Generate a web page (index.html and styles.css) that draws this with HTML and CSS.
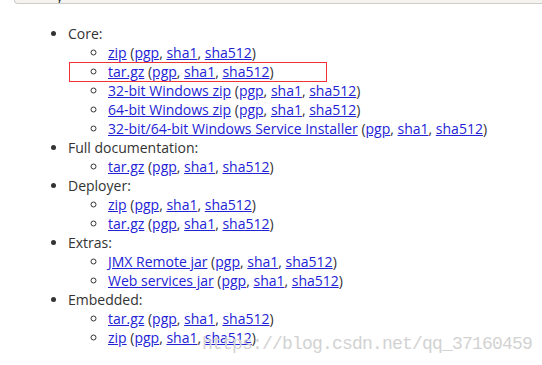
FILE: index.html
```html
<!DOCTYPE html>
<html>
<head>
<meta charset="utf-8">
<link rel="stylesheet" href="styles.css">
</head>
<body>
<div class="topbox"><span class="cut">y</span></div>
<ul class="list">
  <li>Core:
    <ul class="sub">
      <li><a href="#">zip</a> (<a href="#">pgp</a>, <a href="#">sha1</a>, <a href="#">sha512</a>)</li>
      <li><a href="#">tar.gz</a> (<a href="#">pgp</a>, <a href="#">sha1</a>, <a href="#">sha512</a>)</li>
      <li><a href="#">32-bit Windows zip</a> (<a href="#">pgp</a>, <a href="#">sha1</a>, <a href="#">sha512</a>)</li>
      <li><a href="#">64-bit Windows zip</a> (<a href="#">pgp</a>, <a href="#">sha1</a>, <a href="#">sha512</a>)</li>
      <li><a href="#">32-bit/64-bit Windows Service Installer</a> (<a href="#">pgp</a>, <a href="#">sha1</a>, <a href="#">sha512</a>)</li>
    </ul>
  </li>
  <li>Full documentation:
    <ul class="sub">
      <li><a href="#">tar.gz</a> (<a href="#">pgp</a>, <a href="#">sha1</a>, <a href="#">sha512</a>)</li>
    </ul>
  </li>
  <li>Deployer:
    <ul class="sub">
      <li><a href="#">zip</a> (<a href="#">pgp</a>, <a href="#">sha1</a>, <a href="#">sha512</a>)</li>
      <li><a href="#">tar.gz</a> (<a href="#">pgp</a>, <a href="#">sha1</a>, <a href="#">sha512</a>)</li>
    </ul>
  </li>
  <li>Extras:
    <ul class="sub">
      <li><a href="#">JMX Remote jar</a> (<a href="#">pgp</a>, <a href="#">sha1</a>, <a href="#">sha512</a>)</li>
      <li><a href="#">Web services jar</a> (<a href="#">pgp</a>, <a href="#">sha1</a>, <a href="#">sha512</a>)</li>
    </ul>
  </li>
  <li>Embedded:
    <ul class="sub">
      <li><a href="#">tar.gz</a> (<a href="#">pgp</a>, <a href="#">sha1</a>, <a href="#">sha512</a>)</li>
      <li><a href="#">zip</a> (<a href="#">pgp</a>, <a href="#">sha1</a>, <a href="#">sha512</a>)</li>
    </ul>
  </li>
</ul>
<div class="highlight"></div>
<div class="watermark">https://blog.csdn.net/qq_37160459</div>
</body>
</html>
```
FILE: styles.css
```css
html, body {
  margin: 0;
  padding: 0;
  background: #ffffff;
}
body {
  font-family: "Open Sans", "Liberation Sans", sans-serif;
  font-size: 14px;
  line-height: 19px;
  color: #333333;
  width: 542px;
  height: 365px;
  overflow: hidden;
  position: relative;
}
.topbox {
  margin-left: 14px;
  height: 3px;
  background: #f4f3ef;
  border: 1px solid #cfcdc8;
  border-top: none;
  border-right: none;
  border-bottom-left-radius: 4px;
  overflow: hidden;
  position: relative;
}
.cut {
  position: absolute;
  left: 41px;
  top: -14px;
  color: #333;
  font-size: 14px;
}
.list {
  margin: 20px 0 0 0;
  padding: 0 0 0 68px;
  list-style: disc;
}
.sub {
  margin: 0;
  padding: 0 0 0 40px;
  list-style: circle;
}
a {
  color: #2323d6;
  text-decoration: underline;
}
.highlight {
  position: absolute;
  left: 69px;
  top: 62px;
  width: 256px;
  height: 18px;
  border: 1px solid #ee3333;
}
.watermark {
  position: absolute;
  left: 202px;
  top: 334px;
  font-family: "Liberation Mono", monospace;
  font-size: 18px;
  letter-spacing: -0.8px;
  line-height: 20px;
  color: #d2d2d2;
  white-space: nowrap;
}
```
